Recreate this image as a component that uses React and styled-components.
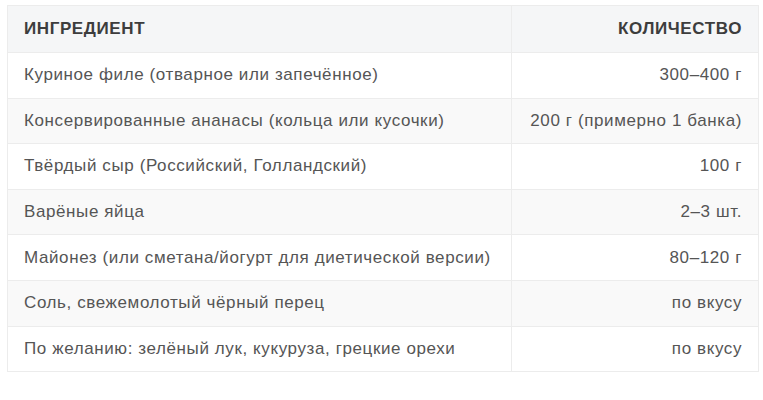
import React from 'react';
import styled, { createGlobalStyle } from 'styled-components';

const GlobalStyle = createGlobalStyle`
    body {
        margin: 0;
        background: #fff;
        font-family: "Liberation Sans", Arial, sans-serif;
    }
`;

const Wrap = styled.div`
    padding: 5px 4px 0 7px;
`;

const Table = styled.table`
    width: 752px;
    border-collapse: collapse;
    border: 1px solid #ececec;
    font-size: 17px;
    letter-spacing: 0.6px;
    color: #555;
`;

const HeadCell = styled.th`
    height: 46px;
    padding: 0 16px;
    background: #f5f6f7;
    border: 1px solid #ececec;
    font-size: 17px;
    font-weight: 700;
    color: #3d3d3d;
    text-transform: uppercase;
    text-align: ${props => props.right ? 'right' : 'left'};
    width: ${props => props.right ? '214px' : 'auto'};
`;

const Row = styled.tr`
    background: ${props => props.striped ? '#f9f9f9' : '#fff'};
`;

const Cell = styled.td`
    height: 44.6px;
    padding: 0 16px;
    border: 1px solid #ececec;
    text-align: ${props => props.right ? 'right' : 'left'};
`;

const rows = [
    ['Куриное филе (отварное или запечённое)', '300–400 г'],
    ['Консервированные ананасы (кольца или кусочки)', '200 г (примерно 1 банка)'],
    ['Твёрдый сыр (Российский, Голландский)', '100 г'],
    ['Варёные яйца', '2–3 шт.'],
    ['Майонез (или сметана/йогурт для диетической версии)', '80–120 г'],
    ['Соль, свежемолотый чёрный перец', 'по вкусу'],
    ['По желанию: зелёный лук, кукуруза, грецкие орехи', 'по вкусу'],
];

const App = () => {
    return (
        <Wrap>
            <GlobalStyle />
            <Table>
                <thead>
                    <tr>
                        <HeadCell>Ингредиент</HeadCell>
                        <HeadCell right>Количество</HeadCell>
                    </tr>
                </thead>
                <tbody>
                    {rows.map(([name, amount], i) => (
                        <Row key={name} striped={i % 2 === 1}>
                            <Cell>{name}</Cell>
                            <Cell right>{amount}</Cell>
                        </Row>
                    ))}
                </tbody>
            </Table>
        </Wrap>
    );
};

export default App;
